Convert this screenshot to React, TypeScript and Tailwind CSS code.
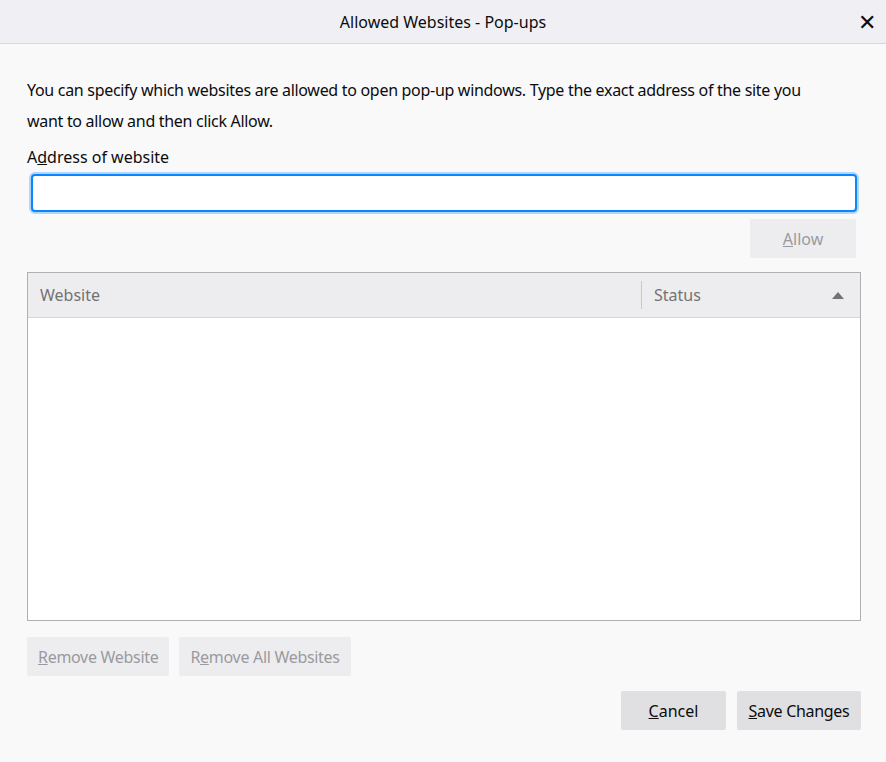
export default function App() {
  return (
    <div className="w-[886px] h-[762px] bg-[#f9f9fa] flex flex-col text-[#0c0c0d] overflow-hidden" style={{ fontFamily: '"Noto Sans", "Open Sans", sans-serif' }}>
      <div className="h-[44px] shrink-0 bg-[#f0f0f4] border-b border-[#d7d7db] flex items-center justify-center relative">
        <span className="text-[16px]">Allowed Websites - Pop-ups</span>
        <span className="absolute right-[10px] top-[10px] text-[22px] leading-none">✕</span>
      </div>
      <div className="pl-[27px] pr-[25px] flex flex-col">
        <p className="mt-[31px] max-w-[810px] text-[16px] leading-[31px] tracking-[-0.3px]">You can specify which websites are allowed to open pop-up windows. Type the exact address of the site you want to allow and then click Allow.</p>
        <label className="mt-[9px] text-[16px] leading-[22px]">A<u>d</u>dress of website</label>
        <div className="mt-[6px] ml-[4px] mr-[4px] h-[38px] bg-white border-2 border-[#0a84ff] rounded-[4px] shadow-[0_0_0_2px_rgba(10,132,255,0.3)]" />
        <div className="flex justify-end mt-[7px] mr-[5px]">
          <div className="w-[106px] h-[39px] bg-[#ededf0] rounded-[2px] flex items-center justify-center text-[16px] text-[#9a9a9e]"><span><u>A</u>llow</span></div>
        </div>
        <div className="mt-[14px] h-[349px] border border-[#b1b1b3] bg-white flex flex-col">
          <div className="h-[45px] bg-[#ededf0] border-b border-[#d7d7db] flex items-center text-[16px] text-[#737373]">
            <div className="flex-1 pl-[12px]">Website</div>
            <div className="w-px h-[28px] bg-[#c8c8cc]" />
            <div className="w-[218px] pl-[12px] flex items-center justify-between pr-[16px]">
              <span>Status</span>
              <span className="w-0 h-0 border-l-[6px] border-r-[6px] border-b-[7px] border-l-transparent border-r-transparent border-b-[#737373]" />
            </div>
          </div>
        </div>
        <div className="flex gap-[10px] mt-[16px]">
          <div className="h-[39px] px-[11px] bg-[#ededf0] rounded-[2px] flex items-center text-[16px] text-[#9a9a9e] tracking-[-0.3px]"><span><u>R</u>emove Website</span></div>
          <div className="h-[39px] px-[11px] bg-[#ededf0] rounded-[2px] flex items-center text-[16px] text-[#9a9a9e] tracking-[-0.3px]"><span>R<u>e</u>move All Websites</span></div>
        </div>
        <div className="flex justify-end gap-[11px] mt-[15px]">
          <div className="h-[39px] w-[105px] bg-[#e0e0e2] rounded-[2px] flex items-center justify-center text-[16px]"><span><u>C</u>ancel</span></div>
          <div className="h-[39px] w-[124px] bg-[#e0e0e2] rounded-[2px] flex items-center justify-center text-[16px] tracking-[-0.3px]"><span><u>S</u>ave Changes</span></div>
        </div>
      </div>
    </div>
  );
}
